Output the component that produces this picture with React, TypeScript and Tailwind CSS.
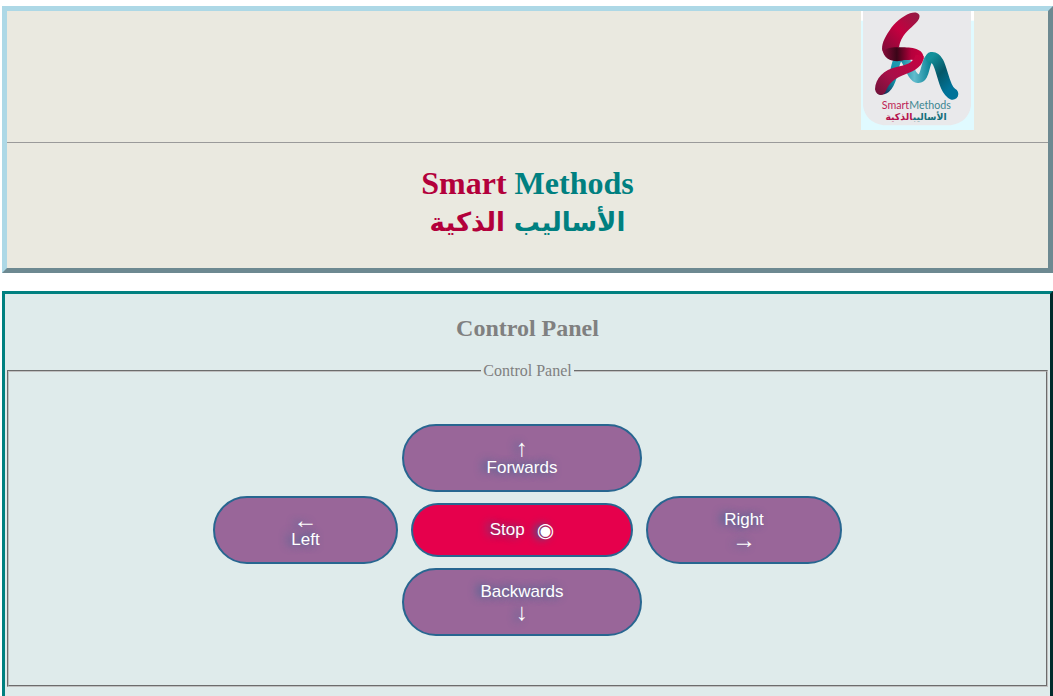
import type { ReactNode } from "react";

function Logo() {
  return (
    <svg viewBox="33 33 339 357" className="h-[119px] w-[113px]" role="img" aria-label="Smart Methods logo">
      <defs>
        <linearGradient id="sTop" x1="0" y1="1" x2="1" y2="0">
          <stop offset="0" stopColor="#7d0c38" />
          <stop offset="0.5" stopColor="#c4003f" />
          <stop offset="1" stopColor="#8f1d45" />
        </linearGradient>
        <linearGradient id="sMid" x1="0" y1="0" x2="1" y2="0">
          <stop offset="0" stopColor="#8a0c3a" />
          <stop offset="0.35" stopColor="#3a0518" />
          <stop offset="0.7" stopColor="#b5003c" />
          <stop offset="1" stopColor="#c9003f" />
        </linearGradient>
        <linearGradient id="sLow" x1="1" y1="0" x2="0" y2="1">
          <stop offset="0" stopColor="#c9003f" />
          <stop offset="0.6" stopColor="#a80f48" />
          <stop offset="1" stopColor="#6d1238" />
        </linearGradient>
        <linearGradient id="mLeft" x1="0" y1="1" x2="1" y2="0">
          <stop offset="0" stopColor="#17234f" />
          <stop offset="0.45" stopColor="#0f8fa5" />
          <stop offset="1" stopColor="#26a3b8" />
        </linearGradient>
        <linearGradient id="mMid" x1="0" y1="0" x2="1" y2="0">
          <stop offset="0" stopColor="#1289a0" />
          <stop offset="0.45" stopColor="#62bccd" />
          <stop offset="1" stopColor="#078094" />
        </linearGradient>
        <linearGradient id="mRight" x1="0" y1="0" x2="0.6" y2="1">
          <stop offset="0" stopColor="#12909a" />
          <stop offset="0.5" stopColor="#055768" />
          <stop offset="1" stopColor="#007399" />
        </linearGradient>
      </defs>
      <rect x="33" y="33" width="339" height="357" fill="#e0faff" />
      <rect x="33" y="33" width="339" height="29" fill="#ffffff" />
      <path d="M39 33H363V318Q355 367 302 376H100Q47 367 39 318Z" fill="#e9e9eb" />
      <g fill="none" strokeLinecap="round" strokeLinejoin="round">
        <path d="M92 272C116 274 126 244 132 216C137 190 142 171 155 170" stroke="url(#mLeft)" strokeWidth="24" />
        <path d="M152 171C174 168 178 232 204 236C230 238 222 180 243 172" stroke="url(#mMid)" strokeWidth="26" />
        <path d="M244 173C278 168 274 266 308 282" stroke="url(#mRight)" strokeWidth="34" />
      </g>
      <path
        d="M97 146C97 132 130 140 151 142C185 142 222 145 221 176L193 192C197 172 178 182 162 180C140 188 100 184 97 146Z"
        fill="url(#sMid)"
      />
      <path
        d="M180 40C198 33 214 40 207 56C198 74 172 88 160 108C150 124 149 133 147 142C130 142 112 142 98 154C92 136 104 112 118 92C135 66 156 50 180 40Z"
        fill="url(#sTop)"
      />
      <path
        d="M221 168C222 196 196 212 166 223C136 234 117 248 106 276C98 290 78 287 75 268C76 235 102 208 140 201C166 195 190 190 197 164Z"
        fill="url(#sLow)"
      />
      <text
        x="199"
        y="328"
        textAnchor="middle"
        fontFamily="Lato, 'Noto Sans', sans-serif"
        fontSize="32"
      >
        <tspan fill="#bd1f56">Smart</tspan>
        <tspan fill="#3d8791">Methods</tspan>
      </text>
      <text x="198" y="361" textAnchor="middle" fontFamily="'DejaVu Sans', sans-serif" fontSize="28" fontWeight="700">
        <tspan fill="#17707c">الأساليب</tspan>
        <tspan fill="#b5124c">الذكية</tspan>
      </text>
    </svg>
  );
}

function ControlButton({ className, children }: { className: string; children: ReactNode }) {
  return (
    <button
      type="button"
      className={`flex flex-col items-center justify-center rounded-full border-2 border-[#286690] text-[17px] leading-5 text-white [text-shadow:-4px_0_8px_#286690] ${className}`}
    >
      {children}
    </button>
  );
}

function Arrow({ children }: { children: ReactNode }) {
  return <span className="text-2xl leading-5">{children}</span>;
}

export default function App() {
  return (
    <div className="flex min-h-screen flex-col bg-white pt-1.5 pl-0.5 font-['Liberation_Serif','Times_New_Roman',serif]">
      <header className="mb-[18px] border-[5px] border-t-[#add8e6] border-r-[#6d8991] border-b-[#6d8991] border-l-[#add8e6] bg-[#eae9e0] pb-[26px]">
        <div className="flex justify-end pr-[74px] pb-3">
          <Logo />
        </div>
        <hr className="border-t border-[#9a9a9a]" />
        <h1 className="pt-[21px] text-center text-[32px] leading-[39px] font-bold text-[#008080]">
          <span className="text-[#b3003b]">Smart</span> Methods
          <span dir="rtl" lang="ar" className="block font-['DejaVu_Sans',sans-serif] text-[26px]">
            الأساليب <span className="text-[#b3003b]">الذكية</span>
          </span>
        </h1>
      </header>

      <main className="flex-1 border-[3px] border-b-0 border-t-[#008080] border-r-[#002b2b] border-l-[#008080] bg-[#dfebeb] px-0.5 pb-[9px] text-[#808080]">
        <h2 className="pt-5 text-center text-2xl leading-7 font-bold">Control Panel</h2>
        <fieldset className="mt-5 border-2 border-[#c0c0c0] pt-[44px] pb-[49px] [border-style:groove]">
          <legend className="mx-auto px-0.5 text-base leading-[18px]">Control Panel</legend>
          <div className="grid grid-cols-[185px_240px_196px] place-items-center justify-center gap-1 font-['Liberation_Sans',Arial,sans-serif]">
            <ControlButton className="col-start-2 h-[68px] w-full bg-[#996699]">
              <Arrow>↑</Arrow>
              <span>Forwards</span>
            </ControlButton>
            <ControlButton className="col-start-1 h-[68px] w-full bg-[#996699]">
              <Arrow>←</Arrow>
              <span>Left</span>
            </ControlButton>
            <ControlButton className="h-[54px] w-[222px] bg-[#e6004c]">
              <span className="flex items-center gap-3">
                Stop
                <span className="font-['DejaVu_Sans',sans-serif] text-xl leading-5">◉</span>
              </span>
            </ControlButton>
            <ControlButton className="h-[68px] w-full bg-[#996699]">
              <span>Right</span>
              <Arrow>→</Arrow>
            </ControlButton>
            <ControlButton className="col-start-2 h-[68px] w-full bg-[#996699]">
              <span>Backwards</span>
              <Arrow>↓</Arrow>
            </ControlButton>
          </div>
        </fieldset>
      </main>
    </div>
  );
}
